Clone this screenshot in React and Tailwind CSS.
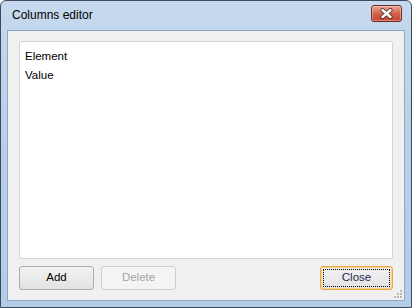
export default function App() {
  const font = { fontFamily: '"Liberation Sans", Arial, sans-serif' };
  return (
    <div className="w-[412px] h-[308px] bg-white" style={font}>
      <div className="w-[412px] h-[308px] flex flex-col rounded-t-[6px] border border-[#3c4a5a] bg-gradient-to-b from-[#c6d9ee] via-[#b7cfe9] to-[#b3cce8] overflow-hidden">
        <div className="h-[29px] flex items-center justify-between pl-[11px] pr-[9px] shrink-0">
          <span className="text-[12px] text-black mt-[-1px]">Columns editor</span>
          <div className="w-[31px] h-[17px] mt-[-4px] rounded-[3px] border border-[#6b2b24] bg-gradient-to-b from-[#e9a898] via-[#d2604a] to-[#c5442e] flex items-center justify-center shadow-[inset_0_0_0_1px_rgba(255,255,255,0.35)]">
            <svg width="13" height="11" viewBox="0 0 13 11">
              <path d="M2.5 2 L10.5 9 M10.5 2 L2.5 9" stroke="#4a2a28" strokeWidth="4" strokeLinecap="round" />
              <path d="M2.5 2 L10.5 9 M10.5 2 L2.5 9" stroke="#ffffff" strokeWidth="2.4" strokeLinecap="round" />
            </svg>
          </div>
        </div>
        <div className="flex-1 mx-[6px] mb-[6px] border border-[#8ea9c6] bg-[#f0f0f0] flex flex-col px-[11px] pt-[10px] pb-[10px] relative">
          <div className="flex-1 bg-white border border-[#d5d5d5] rounded-[2px] px-[5px] pt-[5px] flex flex-col text-[11.5px] text-black">
            <div className="h-[19px] flex items-center">Element</div>
            <div className="h-[19px] flex items-center">Value</div>
          </div>
          <div className="flex items-center mt-[7px] h-[24px]">
            <button className="w-[75px] h-[24px] rounded-[3px] border border-[#acacac] bg-gradient-to-b from-[#f2f2f2] to-[#e2e2e2] text-[11.5px] text-black flex items-center justify-center">Add</button>
            <button className="ml-[7px] w-[75px] h-[24px] rounded-[3px] border border-[#cfcfcf] bg-[#f4f4f4] text-[11.5px] text-[#a3a3a3] flex items-center justify-center">Delete</button>
            <div className="flex-1" />
            <button className="w-[73px] h-[24px] rounded-[3px] border border-[#e8a640] bg-gradient-to-b from-[#f2f2f2] to-[#e2e2e2] p-[2px] shadow-[inset_0_0_0_1px_#fbd28d]">
              <div className="w-full h-full border border-dotted border-black flex items-center justify-center text-[11.5px] text-[#1d2a55]">Close</div>
            </button>
          </div>
          <svg className="absolute right-[2px] bottom-[2px]" width="8" height="8" viewBox="0 0 8 8">
            <g fill="#b8b8b8">
              <rect x="6" y="0" width="2" height="2" />
              <rect x="3" y="3" width="2" height="2" />
              <rect x="6" y="3" width="2" height="2" />
              <rect x="0" y="6" width="2" height="2" />
              <rect x="3" y="6" width="2" height="2" />
              <rect x="6" y="6" width="2" height="2" />
            </g>
          </svg>
        </div>
      </div>
    </div>
  );
}
